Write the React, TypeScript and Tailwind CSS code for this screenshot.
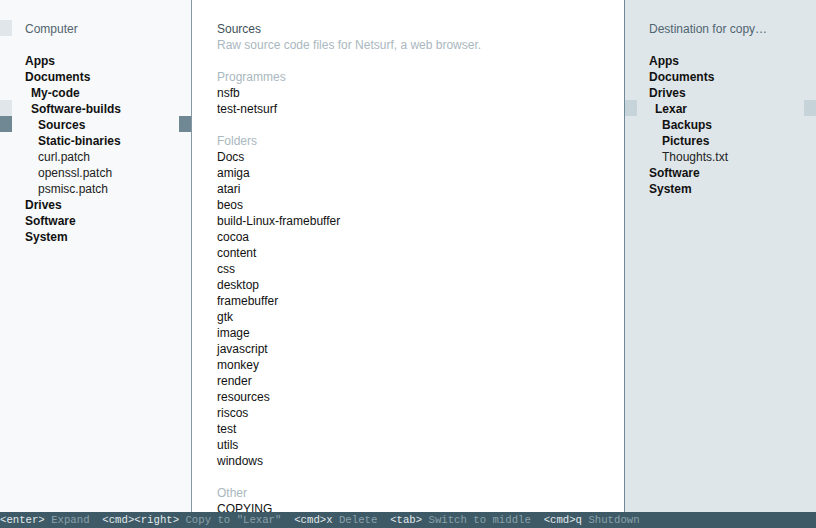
import type { ReactNode } from 'react';

type Row = { label: string; bold?: boolean; depth?: number; left?: 'light' | 'dark'; right?: 'light' | 'dark' };

const computer: Row[] = [
  { label: 'Apps', bold: true },
  { label: 'Documents', bold: true },
  { label: 'My-code', bold: true, depth: 1 },
  { label: 'Software-builds', bold: true, depth: 1, left: 'light' },
  { label: 'Sources', bold: true, depth: 2, left: 'dark', right: 'dark' },
  { label: 'Static-binaries', bold: true, depth: 2 },
  { label: 'curl.patch', depth: 2 },
  { label: 'openssl.patch', depth: 2 },
  { label: 'psmisc.patch', depth: 2 },
  { label: 'Drives', bold: true },
  { label: 'Software', bold: true },
  { label: 'System', bold: true },
];

const destination: Row[] = [
  { label: 'Apps', bold: true },
  { label: 'Documents', bold: true },
  { label: 'Drives', bold: true },
  { label: 'Lexar', bold: true, depth: 1, left: 'light', right: 'light' },
  { label: 'Backups', bold: true, depth: 2 },
  { label: 'Pictures', bold: true, depth: 2 },
  { label: 'Thoughts.txt', depth: 2 },
  { label: 'Software', bold: true },
  { label: 'System', bold: true },
];

const folders = [
  'Docs', 'amiga', 'atari', 'beos', 'build-Linux-framebuffer', 'cocoa', 'content', 'css',
  'desktop', 'framebuffer', 'gtk', 'image', 'javascript', 'monkey', 'render', 'resources',
  'riscos', 'test', 'utils', 'windows',
];

const shortcuts: [string, string][] = [
  ['<enter>', 'Expand'],
  ['<cmd><right>', 'Copy to "Lexar"'],
  ['<cmd>x', 'Delete'],
  ['<tab>', 'Switch to middle'],
  ['<cmd>q', 'Shutdown'],
];

function Marker({ tone, side }: { tone?: 'light' | 'dark'; side: 'panel' | 'dest' }) {
  const cls =
    tone === 'dark'
      ? 'bg-[#6f8893]'
      : tone === 'light'
        ? side === 'dest'
          ? 'bg-[#c6d3d9]'
          : 'bg-[#e0e6ea]'
        : '';
  return <span className={'h-4 w-3 shrink-0 ' + cls} />;
}

function Line({
  children,
  left,
  right,
  side = 'panel',
  className = '',
}: {
  children?: ReactNode;
  left?: 'light' | 'dark';
  right?: 'light' | 'dark';
  side?: 'panel' | 'dest';
  className?: string;
}) {
  const pad = side === 'dest' ? 'pl-3' : 'pl-[13px]';
  return (
    <div className="flex h-4">
      <Marker tone={left} side={side} />
      <span className={'h-4 min-w-0 flex-1 truncate whitespace-pre pt-px leading-4 ' + pad + ' ' + className}>{children}</span>
      <Marker tone={right} side={side} />
    </div>
  );
}

function Tree({ rows, side }: { rows: Row[]; side: 'panel' | 'dest' }) {
  return (
    <>
      {rows.map((r, i) => (
        <Line key={i} left={r.left} right={r.right} side={side} className={r.bold ? 'font-bold text-[#111]' : 'text-[#222]'}>
          <span className={r.depth === 2 ? 'pl-[13px]' : r.depth === 1 ? 'pl-[6px]' : ''}>{r.label}</span>
        </Line>
      ))}
    </>
  );
}

export default function App() {
  return (
    <div className="flex h-[528px] w-[816px] flex-col overflow-hidden bg-white text-[12px] font-['Liberation_Sans',Arial,sans-serif]">
      <div className="flex h-[512px] min-h-0">
        <aside className="w-[192px] shrink-0 border-r border-[#8598a1] bg-[#f7f9fa] pt-5">
          <Line left="light" className="text-[#52636d]">Computer</Line>
          <Line />
          <Tree rows={computer} side="panel" />
        </aside>

        <main className="min-w-0 flex-1 overflow-hidden pt-5">
          <Line className="text-[#3e505a]">Sources</Line>
          <Line className="text-[#a9b7be]">Raw source code files for Netsurf, a web browser.</Line>
          <Line />
          <Line className="text-[#a9b7be]">Programmes</Line>
          <Line className="text-[#111]">nsfb</Line>
          <Line className="text-[#111]">test-netsurf</Line>
          <Line />
          <Line className="text-[#a9b7be]">Folders</Line>
          {folders.map((f) => (
            <Line key={f} className="text-[#111]">{f}</Line>
          ))}
          <Line />
          <Line className="text-[#a9b7be]">Other</Line>
          <Line className="text-[#111]">COPYING</Line>
        </main>

        <aside className="w-[192px] shrink-0 border-l border-[#6f8a96] bg-[#dfe6e9] pt-5">
          <Line side="dest" className="text-[#4f6570]">Destination for copy…</Line>
          <Line side="dest" />
          <Tree rows={destination} side="dest" />
        </aside>
      </div>

      <footer className="flex h-4 shrink-0 items-center whitespace-pre bg-[#3d5a66] text-[10.67px] leading-4 font-['Liberation_Mono','Courier_New',monospace]">
        {shortcuts.map(([k, d], i) => (
          <span key={k}>
            <span className="text-[#e3e9ec]">{k}</span>
            <span className="text-[#8ca1aa]">{' ' + d}</span>
            {i < shortcuts.length - 1 ? '  ' : ''}
          </span>
        ))}
      </footer>
    </div>
  );
}
